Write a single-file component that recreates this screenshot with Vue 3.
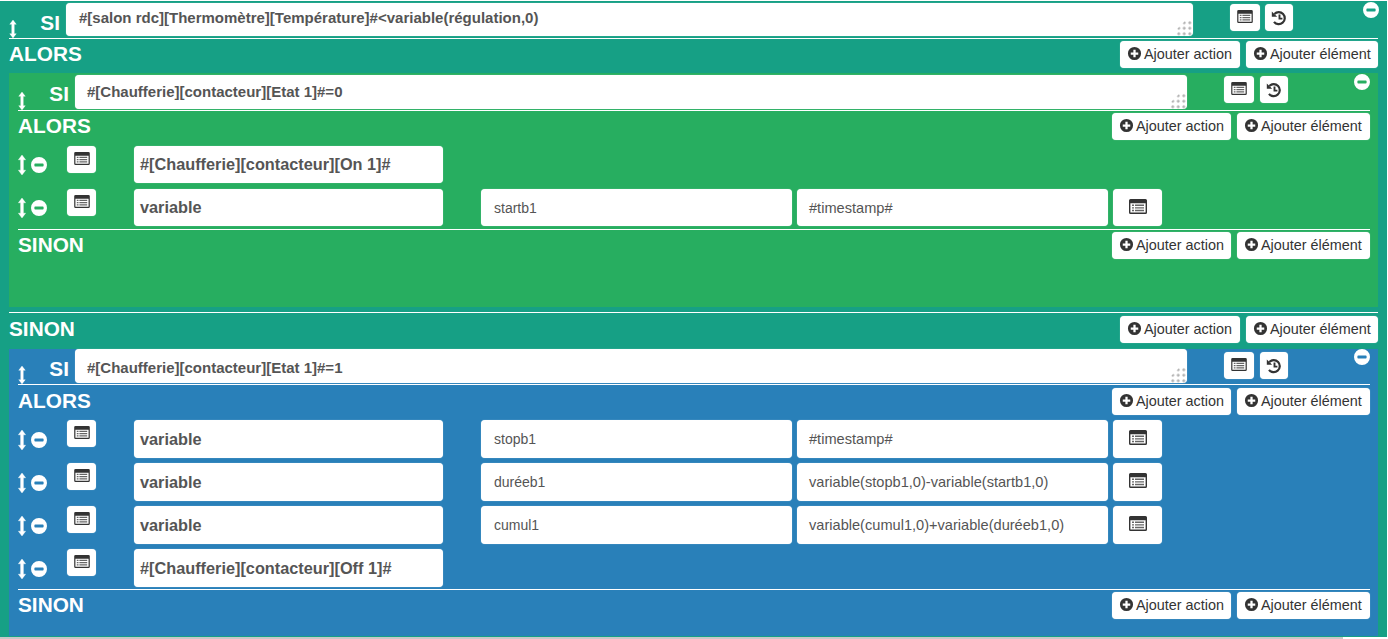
<script setup>
const greenRows = [
  { target: "#[Chaufferie][contacteur][On 1]#" },
  { target: "variable", name: "startb1", value: "#timestamp#" },
];

const blueRows = [
  { target: "variable", name: "stopb1", value: "#timestamp#" },
  { target: "variable", name: "duréeb1", value: "variable(stopb1,0)-variable(startb1,0)" },
  { target: "variable", name: "cumul1", value: "variable(cumul1,0)+variable(duréeb1,0)" },
  { target: "#[Chaufferie][contacteur][Off 1]#" },
];

const blocks = [
  { id: "green", cond: "#[Chaufferie][contacteur][Etat 1]#=0", rows: greenRows },
  { id: "blue", cond: "#[Chaufferie][contacteur][Etat 1]#=1", rows: blueRows },
];
</script>

<template>
  <svg class="sprites" xmlns="http://www.w3.org/2000/svg">
    <symbol id="i-arrows" viewBox="0 0 8 20">
      <path d="M4 0 7.600 4.800 5.400 4.800V15.200H7.600L4 20 .4 15.200H2.600V4.800H.4Z" fill="#fff" stroke="#fff" stroke-width=".4" stroke-linejoin="round" />
    </symbol>
    <symbol id="i-minus" viewBox="0 0 16 16">
      <path fill-rule="evenodd" fill="#fff" d="M8 0a8 8 0 1 1 0 16A8 8 0 0 1 8 0ZM4.200 6.400a.8.8 0 0 0-.8.8v1.600a.8.800 0 0 0 .8.8h7.600a.8.800 0 0 0 .8-.8V7.200a.8.800 0 0 0-.8-.8Z" />
    </symbol>
    <symbol id="i-plus" viewBox="0 0 16 16">
      <path fill-rule="evenodd" fill="#333" d="M8 1a7 7 0 1 1 0 14A7 7 0 0 1 8 1ZM6.800 4v2.800H4v2.400h2.800V12h2.400V9.200H12V6.800H9.200V4Z" />
    </symbol>
    <symbol id="i-list" viewBox="0 0 18 15">
      <path fill-rule="evenodd" fill="#333" d="M1.500 0h15A1.500 1.500 0 0 1 18 1.500v12a1.500 1.500 0 0 1-1.500 1.500h-15A1.500 1.500 0 0 1 0 13.500v-12A1.500 1.500 0 0 1 1.500 0ZM1.400 4.200v9.400h15.200V4.200Z" />
      <path fill="#666" d="M3 5.600h2v1.400H3ZM6 5.600h9v1.400H6ZM3 8.200h2v1.400H3ZM6 8.200h9v1.400H6ZM3 10.800h2v1.400H3ZM6 10.800h9v1.400H6Z" />
    </symbol>
    <symbol id="i-history" viewBox="0 0 16 16">
      <path d="M3.400 4A6 6 0 1 1 3 11.800" fill="none" stroke="#333" stroke-width="2.200" />
      <path d="M.8 1.500 6.200 6.800H.8Z" fill="#333" />
      <path d="M8.500 4.400V8.600H11.400" fill="none" stroke="#333" stroke-width="1.900" />
    </symbol>
  </svg>

  <div class="page">
    <div class="block teal">
      <div class="si-row">
        <svg class="arrows si-arrows"><use href="#i-arrows" /></svg>
        <span class="si-label">SI</span>
        <div class="cond">
          #[salon rdc][Thermomètre][Température]#&lt;variable(régulation,0)
          <span class="grip"></span>
        </div>
        <div class="si-tools">
          <button class="tool" type="button"><svg class="ico-list"><use href="#i-list" /></svg></button>
          <button class="tool" type="button"><svg class="ico-hist"><use href="#i-history" /></svg></button>
        </div>
        <svg class="remove"><use href="#i-minus" /></svg>
      </div>

      <div class="head">
        <span class="head-title">ALORS</span>
        <div class="head-btns">
          <button class="add add-action" type="button"><svg><use href="#i-plus" /></svg>Ajouter action</button>
          <button class="add add-item" type="button"><svg><use href="#i-plus" /></svg>Ajouter élément</button>
        </div>
      </div>

      <template v-for="(b, i) in blocks" :key="b.id">
        <div class="head head-sinon head-outer" v-if="i === 1">
          <span class="head-title">SINON</span>
          <div class="head-btns">
            <button class="add add-action" type="button"><svg><use href="#i-plus" /></svg>Ajouter action</button>
            <button class="add add-item" type="button"><svg><use href="#i-plus" /></svg>Ajouter élément</button>
          </div>
        </div>

        <div class="block inner" :class="b.id">
          <div class="si-row">
            <svg class="arrows si-arrows"><use href="#i-arrows" /></svg>
            <span class="si-label">SI</span>
            <div class="cond">
              {{ b.cond }}
              <span class="grip"></span>
            </div>
            <div class="si-tools">
              <button class="tool" type="button"><svg class="ico-list"><use href="#i-list" /></svg></button>
              <button class="tool" type="button"><svg class="ico-hist"><use href="#i-history" /></svg></button>
            </div>
            <svg class="remove"><use href="#i-minus" /></svg>
          </div>

          <div class="head head-alors">
            <span class="head-title">ALORS</span>
            <div class="head-btns">
              <button class="add add-action" type="button"><svg><use href="#i-plus" /></svg>Ajouter action</button>
              <button class="add add-item" type="button"><svg><use href="#i-plus" /></svg>Ajouter élément</button>
            </div>
          </div>

          <div class="rows">
            <div class="row" v-for="(r, j) in b.rows" :key="j">
              <div class="row-handle">
                <svg class="arrows"><use href="#i-arrows" /></svg>
                <svg class="row-minus"><use href="#i-minus" /></svg>
              </div>
              <button class="tool row-tool" type="button"><svg class="ico-list"><use href="#i-list" /></svg></button>
              <div class="field strong">{{ r.target }}</div>
              <template v-if="r.name">
                <div class="field name">{{ r.name }}</div>
                <div class="field value">{{ r.value }}</div>
                <button class="tool value-tool" type="button"><svg class="ico-list"><use href="#i-list" /></svg></button>
              </template>
            </div>
          </div>

          <div class="head head-sinon">
            <span class="head-title">SINON</span>
            <div class="head-btns">
              <button class="add add-action" type="button"><svg><use href="#i-plus" /></svg>Ajouter action</button>
              <button class="add add-item" type="button"><svg><use href="#i-plus" /></svg>Ajouter élément</button>
            </div>
          </div>
        </div>
      </template>
    </div>
    <div class="scrollbar"></div>
  </div>
</template>

<style>
html,
body {
  margin: 0;
  background: #fff;
  overflow: hidden;
}
</style>

<style scoped>
.sprites {
  display: none;
}

.page {
  width: 1388px;
  height: 639px;
  font-family: "Liberation Sans", Arial, sans-serif;
  color: #555;
  display: flex;
  flex-direction: column;
}

.block {
  position: relative;
  box-sizing: border-box;
}

.teal {
  background: #16a085;
  height: 636px;
  margin-top: 1px;
  margin-right: 1px;
  padding: 2px 9px 0;
}

.inner {
  padding: 2px 8px 0 9px;
  margin-top: 3px;
}

.green {
  background: #27ae60;
  height: 234px;
}

.blue {
  background: #2980b9;
  height: 287px;
  margin-top: 4px;
  padding-top: 0;
}

.si-row {
  display: flex;
  align-items: flex-start;
  height: 35px;
  border-bottom: 1px solid #fff;
}

.arrows {
  width: 8px;
  height: 20px;
  flex: none;
}

.si-arrows {
  height: 18px;
  margin-top: 17px;
}

.si-label {
  width: 50px;
  margin-left: -1px;
  padding-top: 8px;
  text-align: right;
  padding-right: 6px;
  box-sizing: border-box;
  font-size: 20.800px;
  font-weight: bold;
  line-height: 24px;
  color: #fff;
}

.inner .si-label {
  padding-top: 7px;
}

.blue .si-label {
  padding-top: 8px;
}

.cond {
  position: relative;
  width: 1127px;
  height: 33px;
  padding: 6px 13px;
  box-sizing: border-box;
  background: #fff;
  border-radius: 4px;
  box-shadow: 0 0 1px rgba(255, 255, 255, 0.6);
  font-size: 15px;
  font-weight: bold;
  line-height: 18px;
  white-space: nowrap;
}

.inner .cond {
  width: 1112px;
  height: 34px;
  padding: 8px 12px;
}

.blue .cond {
  padding-top: 10px;
}

.grip {
  position: absolute;
  right: 1px;
  bottom: 0;
  width: 16.500px;
  height: 16.500px;
  background-image: radial-gradient(circle at 50% 50%, #b4b4b4 1.200px, transparent 1.700px);
  background-size: 5.500px 5.500px;
  clip-path: polygon(100% 0, 100% 100%, 0 100%, 0 66%, 66% 0);
}

.si-tools {
  display: flex;
  gap: 5px;
  margin-left: 37px;
  margin-top: 1px;
}

.inner .si-tools {
  gap: 6px;
}

.blue .si-tools {
  margin-top: 3px;
}

.tool {
  width: 30px;
  height: 27px;
  padding: 0 0 2px;
  border: 0;
  border-radius: 4px;
  background: #fff;
  box-shadow: 0 0 1px rgba(255, 255, 255, 0.6);
  display: flex;
  align-items: center;
  justify-content: center;
}

.si-tools .tool:last-child {
  width: 28px;
  padding: 0;
}

.ico-list {
  width: 16px;
  height: 13px;
}

.ico-hist {
  width: 16px;
  height: 16px;
}

.remove {
  position: absolute;
  right: 8px;
  top: 1px;
  width: 16px;
  height: 16px;
}

.blue .remove {
  top: 0;
}

.head {
  display: flex;
  align-items: flex-start;
  justify-content: space-between;
  height: 31px;
}

.head-sinon {
  border-top: 1px solid #fff;
}

.head-outer {
  margin-top: 5px;
  height: 32px;
}

.head-title {
  margin-top: 3px;
  font-size: 20.800px;
  font-weight: bold;
  line-height: 24px;
  color: #fff;
}

.head-btns {
  display: flex;
  gap: 6px;
  margin-top: 2px;
}

.head-outer .head-title,
.blue .head-alors .head-title {
  margin-top: 4px;
}

.head-outer .head-btns,
.blue .head-alors .head-btns {
  margin-top: 3px;
}

.blue .head-alors {
  height: 32px;
}

.add {
  display: flex;
  align-items: center;
  gap: 2px;
  height: 27px;
  padding: 0 0 2px 7px;
  border: 0;
  border-radius: 4px;
  background: #fff;
  box-shadow: 0 0 1px rgba(255, 255, 255, 0.6);
  color: #333;
  font-family: inherit;
  font-size: 14.400px;
  white-space: nowrap;
}

.add svg {
  width: 15px;
  height: 15px;
  flex: none;
}

.add-action {
  width: 120px;
}

.add-item {
  width: 132px;
}

.inner .add-action {
  width: 119px;
}

.inner .add-item {
  width: 133px;
}

.rows {
  display: flex;
  flex-direction: column;
  gap: 6px;
  padding: 4px 0 3px;
}

.blue .rows {
  gap: 5px;
  padding: 3px 0 2px;
}

.row {
  display: flex;
  align-items: flex-start;
  height: 37px;
}

.blue .row {
  height: 38px;
}

.row-handle {
  display: flex;
  align-items: center;
  gap: 5px;
  width: 49px;
  height: 100%;
  padding-top: 1px;
  box-sizing: border-box;
}

.row-minus {
  width: 16px;
  height: 16px;
}

.row-tool {
  width: 29px;
  margin-right: 38px;
}

.field {
  box-sizing: border-box;
  height: 100%;
  padding: 0 13px;
  display: flex;
  align-items: center;
  background: #fff;
  border-radius: 4px;
  box-shadow: 0 0 1px rgba(255, 255, 255, 0.6);
  font-size: 14px;
  white-space: nowrap;
}

.strong {
  width: 309px;
  padding: 0 6px;
  font-size: 16.300px;
  font-weight: bold;
}

.name {
  width: 311px;
  margin-left: 38px;
}

.value {
  width: 311px;
  margin-left: 5px;
  padding: 0 12px;
  font-size: 14.600px;
}

.value-tool {
  width: 49px;
  height: 100%;
  margin-left: 5px;
  padding-bottom: 3px;
}

.value-tool .ico-list {
  width: 18px;
  height: 15px;
}

.scrollbar {
  flex: none;
  height: 2px;
  width: 1343px;
  background: #c8c8c8;
}
</style>
